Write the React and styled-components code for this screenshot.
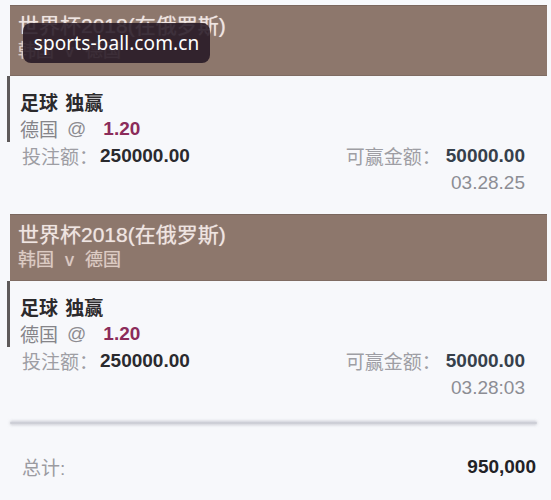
import React from "react";
import styled, { createGlobalStyle } from "styled-components";

const Global = createGlobalStyle`
  html, body { margin: 0; padding: 0; }
  body {
    background: #f7f8fb;
    font-family: "Liberation Sans", "Noto Sans CJK SC", sans-serif;
    width: 551px;
    overflow: hidden;
  }
`;

const Page = styled.div`
  position: relative;
  padding: 5px 4px 0 7px;
  height: 495px;
`;

const Card = styled.section`
  display: flex;
  flex-direction: column;
`;

const Header = styled.header`
  margin-left: 3px;
  background: #8d776c;
  border-top: 1px solid #7a675e;
  border-bottom: 1px solid #7f6c63;
  height: ${(p) => p.$h}px;
  box-sizing: border-box;
  padding: 7px 8px 0;
  display: flex;
  flex-direction: column;
`;

const Title = styled.div`
  font-size: 21px;
  line-height: 26px;
  color: #efe5e2;
  text-shadow: 0 0 1px rgba(255, 240, 235, 0.6);
`;

const Sub = styled.div`
  font-size: 18px;
  line-height: 24px;
  color: #dccbc3;
  word-spacing: 6px;
  text-shadow: 0 0 1px rgba(255, 240, 235, 0.5);
`;

const Body = styled.div`
  display: flex;
  flex-direction: column;
  padding: ${(p) => p.$top}px 0 ${(p) => p.$bottom}px;
`;

const Selection = styled.div`
  border-left: 3px solid #5e5a5a;
  margin-top: -${(p) => p.$top}px;
  padding-top: ${(p) => p.$top}px;
  padding-left: 10px;
  display: flex;
  flex-direction: column;
`;

const Row = styled.div`
  display: flex;
  align-items: center;
  justify-content: ${(p) => (p.$right ? "flex-end" : "space-between")};
  height: 27px;
  font-size: 19px;
  padding-left: ${(p) => (p.$inset ? 13 : 0)}px;
  padding-right: ${(p) => (p.$right ? 22 : 0)}px;
`;

const Market = styled.span`
  font-weight: bold;
  color: #2c2a2c;
  word-spacing: 2px;
`;

const Team = styled.span`
  color: #858489;
`;

const At = styled.span`
  color: #8d8c91;
  margin: 0 17px 0 9px;
`;

const Odds = styled.span`
  font-weight: bold;
  color: #8b2c5a;
`;

const Pair = styled.span`
  display: flex;
  align-items: center;
  padding-left: ${(p) => p.$pl || 0}px;
  padding-right: ${(p) => p.$pr || 0}px;
`;

const Label = styled.span`
  color: #9e9ea4;
`;

const Value = styled.span`
  font-weight: bold;
  margin-left: ${(p) => p.$ml || 2}px;
  color: ${(p) => p.$c || "#2a2a2e"};
`;

const Stamp = styled.span`
  color: #8c8d94;
`;

const Divider = styled.div`
  margin: 20px 10px 0 3px;
  height: 4px;
  border-radius: 2px;
  background: linear-gradient(to bottom, #e2e3e9, #c6c8d0 50%, #e4e5ea);
  box-shadow: 0 0 3px rgba(170, 172, 182, 0.6);
`;

const Total = styled.div`
  display: flex;
  justify-content: space-between;
  align-items: center;
  height: 27px;
  margin-top: 28px;
  padding: 0 11px 0 15px;
  font-size: 19px;
`;

const TotalLabel = styled.span`
  color: #9b9ba1;
`;

const TotalValue = styled.span`
  font-weight: bold;
  color: #222226;
`;

const Watermark = styled.div`
  position: absolute;
  left: 23px;
  top: 23px;
  width: 187px;
  height: 40px;
  border-radius: 8px;
  background: rgba(38, 24, 36, 0.88);
  color: #ffffff;
  font-family: "Noto Sans", "Open Sans", sans-serif;
  font-size: 19px;
  display: flex;
  align-items: center;
  justify-content: center;
  letter-spacing: 0.1px;
`;

const bets = [
  { h: 71, stamp: "03.28.25", bottom: 18 },
  { h: 67, stamp: "03.28:03", bottom: 0 },
];

function Bet({ h, stamp, bottom }) {
  return (
    <Card>
      <Header $h={h}>
        <Title>世界杯2018(在俄罗斯)</Title>
        <Sub>韩国 v 德国</Sub>
      </Header>
      <Body $top={12} $bottom={bottom}>
        <Selection $top={12}>
          <Row>
            <Market>足球 独赢</Market>
          </Row>
          <Row>
            <Pair>
              <Team>德国</Team>
              <At>@</At>
              <Odds>1.20</Odds>
            </Pair>
          </Row>
        </Selection>
        <Row $inset>
          <Pair $pl={2}>
            <Label>投注额：</Label>
            <Value>250000.00</Value>
          </Pair>
          <Pair $pr={22}>
            <Label>可赢金额：</Label>
            <Value $ml={5} $c="#36404b">50000.00</Value>
          </Pair>
        </Row>
        <Row $right>
          <Stamp>{stamp}</Stamp>
        </Row>
      </Body>
    </Card>
  );
}

export default function App() {
  return (
    <>
      <Global />
      <Page>
        {bets.map((b) => (
          <Bet key={b.stamp} {...b} />
        ))}
        <Divider />
        <Total>
          <TotalLabel>总计:</TotalLabel>
          <TotalValue>950,000</TotalValue>
        </Total>
        <Watermark>sports-ball.com.cn</Watermark>
      </Page>
    </>
  );
}
